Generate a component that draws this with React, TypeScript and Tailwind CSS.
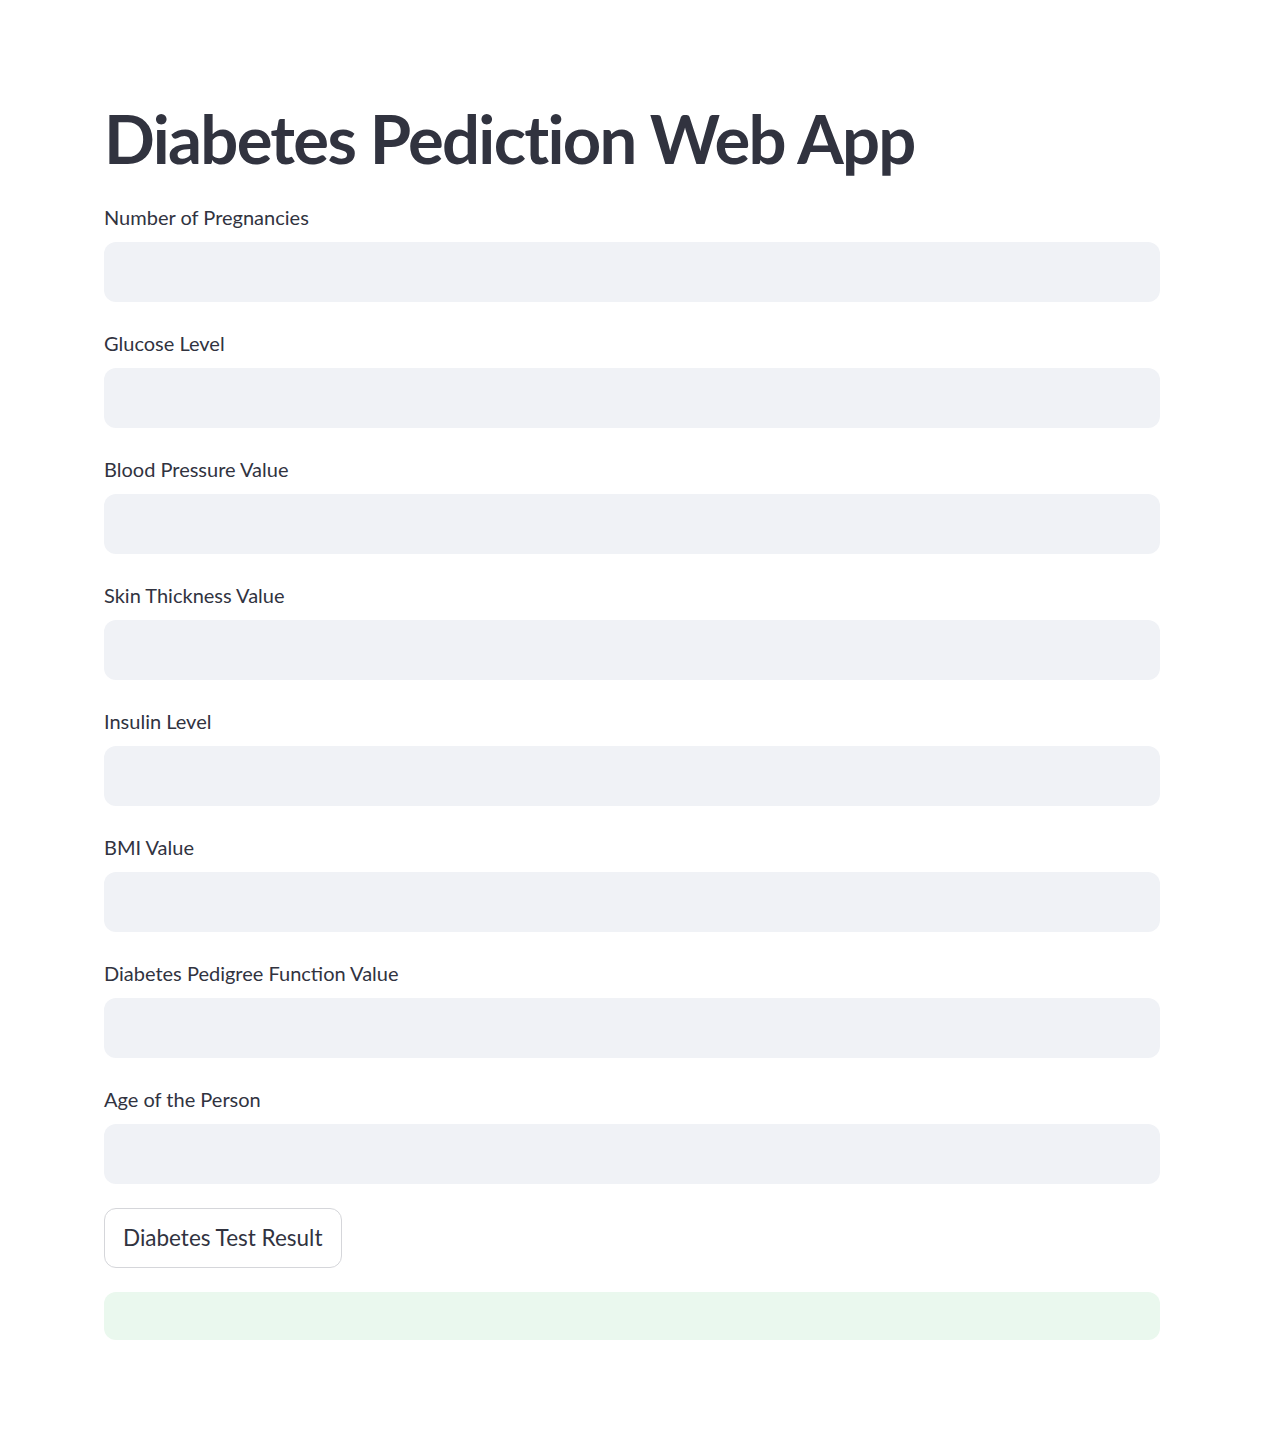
import React from 'react';

const fields = [
  'Number of Pregnancies',
  'Glucose Level',
  'Blood Pressure Value',
  'Skin Thickness Value',
  'Insulin Level',
  'BMI Value',
  'Diabetes Pedigree Function Value',
  'Age of the Person',
];

export default function App() {
  return (
    <div className="min-h-[1432px] bg-white text-[#31333f] font-['Lato','Noto_Sans',sans-serif]">
      <div className="ml-[104px] w-[1056px] pt-[96px]">
        <h1 className="text-[67px] font-bold leading-[84px] tracking-[-1.7px] mb-[20px]">
          Diabetes Pediction Web App
        </h1>

        <div className="flex flex-col gap-[24px]">
          {fields.map((label) => (
            <div key={label}>
              <label className="block text-[20px] leading-[34px] mb-[8px]">{label}</label>
              <input
                type="text"
                className="block w-full h-[60px] rounded-[12px] bg-[#f0f2f6] px-[18px] text-[21px] outline-none"
              />
            </div>
          ))}

          <div>
            <button className="h-[60px] px-[18px] rounded-[12px] border border-[#d5d6da] bg-white text-[22.5px]">
              Diabetes Test Result
            </button>
          </div>

          <div className="h-[48px] rounded-[12px] bg-[#eaf8ee]"></div>
        </div>
      </div>
    </div>
  );
}
